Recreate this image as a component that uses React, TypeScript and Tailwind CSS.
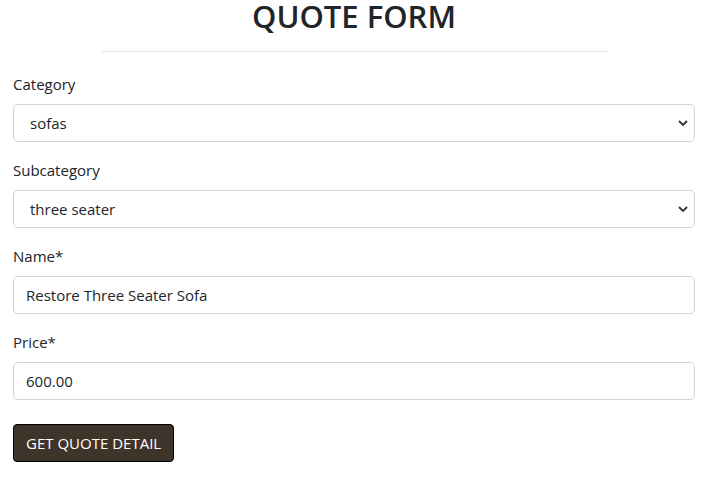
import React from "react";

const font = { fontFamily: '"Open Sans", sans-serif' };

function Chevron() {
  return (
    <svg width="10" height="7" viewBox="0 0 10 7" className="absolute right-[6px] top-1/2 -translate-y-1/2">
      <path d="M1 1.5 L5 5.5 L9 1.5" fill="none" stroke="#333" strokeWidth="1.8" />
    </svg>
  );
}

function Field({ label, value, select }: { label: string; value: string; select?: boolean }) {
  return (
    <div className="mb-4">
      <div className="mb-2 h-6 text-[15px] leading-6 text-[#212529]">{label}</div>
      <div
        className={`relative flex h-[38px] items-center rounded-[5px] border border-[#ced4da] bg-white text-[15px] text-[#212529] ${
          select ? "pl-4" : "pl-3"
        }`}
      >
        {value}
        {select && <Chevron />}
      </div>
    </div>
  );
}

export default function App() {
  return (
    <div className="min-h-[487px] bg-white px-[13px]" style={font}>
      <h1 className="text-center text-[31px] font-semibold leading-[32px] text-[#212529]">QUOTE FORM</h1>
      <div className="mx-auto mt-[19px] h-px w-[505px] bg-[#e0e0e0]" />
      <div className="mt-[20px]">
        <Field label="Category" value="sofas" select />
        <Field label="Subcategory" value="three seater" select />
        <Field label="Name*" value="Restore Three Seater Sofa" />
        <Field label="Price*" value="600.00" />
        <button className="mt-2 h-[38px] rounded-[4px] border border-black bg-[#3f3429] px-3 text-[15px] text-white">
          GET QUOTE DETAIL
        </button>
      </div>
    </div>
  );
}
